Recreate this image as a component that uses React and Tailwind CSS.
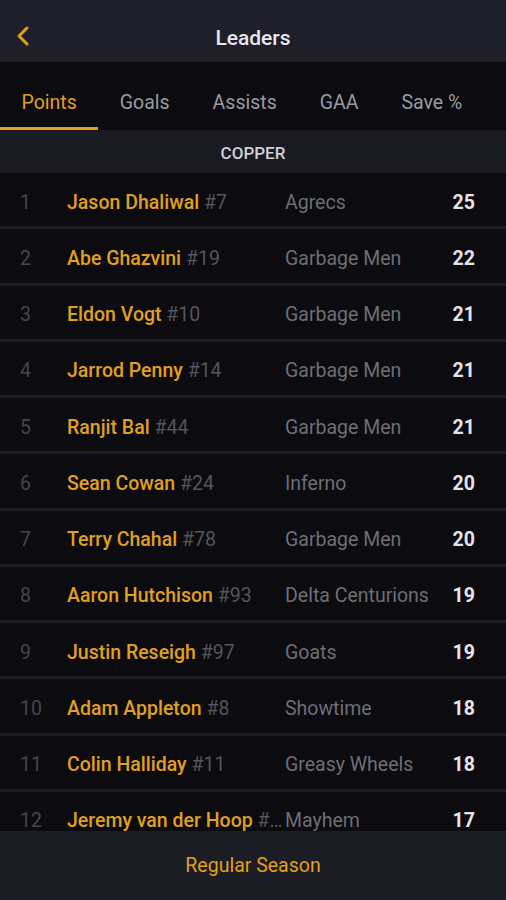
const tabs = ["Points", "Goals", "Assists", "GAA", "Save %"];

const leaders = [
  { rank: 1, name: "Jason Dhaliwal", num: "#7", team: "Agrecs", pts: 25 },
  { rank: 2, name: "Abe Ghazvini", num: "#19", team: "Garbage Men", pts: 22 },
  { rank: 3, name: "Eldon Vogt", num: "#10", team: "Garbage Men", pts: 21 },
  { rank: 4, name: "Jarrod Penny", num: "#14", team: "Garbage Men", pts: 21 },
  { rank: 5, name: "Ranjit Bal", num: "#44", team: "Garbage Men", pts: 21 },
  { rank: 6, name: "Sean Cowan", num: "#24", team: "Inferno", pts: 20 },
  { rank: 7, name: "Terry Chahal", num: "#78", team: "Garbage Men", pts: 20 },
  { rank: 8, name: "Aaron Hutchison", num: "#93", team: "Delta Centurions", pts: 19 },
  { rank: 9, name: "Justin Reseigh", num: "#97", team: "Goats", pts: 19 },
  { rank: 10, name: "Adam Appleton", num: "#8", team: "Showtime", pts: 18 },
  { rank: 11, name: "Colin Halliday", num: "#11", team: "Greasy Wheels", pts: 18 },
  { rank: 12, name: "Jeremy van der Hoop", num: "#…", team: "Mayhem", pts: 17 },
];

const App = () => {
  return (
    <div
      className="w-[506px] h-[900px] flex flex-col overflow-hidden bg-[#0b0b10]"
      style={{ fontFamily: "Roboto, 'Liberation Sans', sans-serif" }}
    >
      {/* header */}
      <div className="h-[62px] shrink-0 bg-[#1e1f28] relative flex items-center justify-center">
        <button className="absolute left-[15px] top-[25px] text-[#e0a020]">
          <svg width="16" height="22" viewBox="0 0 16 22" fill="none">
            <path d="M12 3 L4 11 L12 19" stroke="currentColor" strokeWidth="3" strokeLinecap="round" strokeLinejoin="round" />
          </svg>
        </button>
        <h1 className="text-[21px] font-medium text-[#e8e8ec] mt-[16px]">Leaders</h1>
      </div>

      {/* tabs */}
      <div className="h-[69px] shrink-0 bg-[#0b0b10] flex items-end border-b border-[#1a1b22]">
        {tabs.map((t, i) => (
          <div
            key={t}
            className={`h-full px-[21.5px] flex items-center pt-[17px] text-[19.5px] border-b-[3px] ${
              i === 0 ? "text-[#e0a020] border-[#e0a020]" : "text-[#9a9aa0] border-transparent"
            }`}
          >
            {t}
          </div>
        ))}
      </div>

      {/* section */}
      <div className="h-[42px] shrink-0 bg-[#1a1b22] flex items-center justify-center pt-[4px] text-[17px] font-medium text-[#d0d0d4]">
        COPPER
      </div>

      {/* list */}
      <div className="flex-1 overflow-hidden">
        {leaders.map((p) => (
          <div
            key={p.rank}
            className="h-[56.25px] flex items-center pt-[5px] border-b-[3px] border-[#1c1d25] text-[19.5px]"
          >
            <div className="w-[67px] pl-[20px] text-[#46464c]">{p.rank}</div>
            <div className="w-[218px] whitespace-nowrap overflow-hidden">
              <span className="text-[#e0a020] font-medium">{p.name}</span>{" "}
              <span className="text-[#55555b]">{p.num}</span>
            </div>
            <div className="flex-1 text-[#6e6e74] whitespace-nowrap">{p.team}</div>
            <div className="w-[60px] pr-[31px] text-right font-bold text-[#e4e4e8]">{p.pts}</div>
          </div>
        ))}
      </div>

      {/* footer */}
      <div className="h-[69px] shrink-0 bg-[#1b1c24] flex items-center justify-center text-[19.5px] text-[#e0a020]">
        Regular Season
      </div>
    </div>
  );
};

export default App;
